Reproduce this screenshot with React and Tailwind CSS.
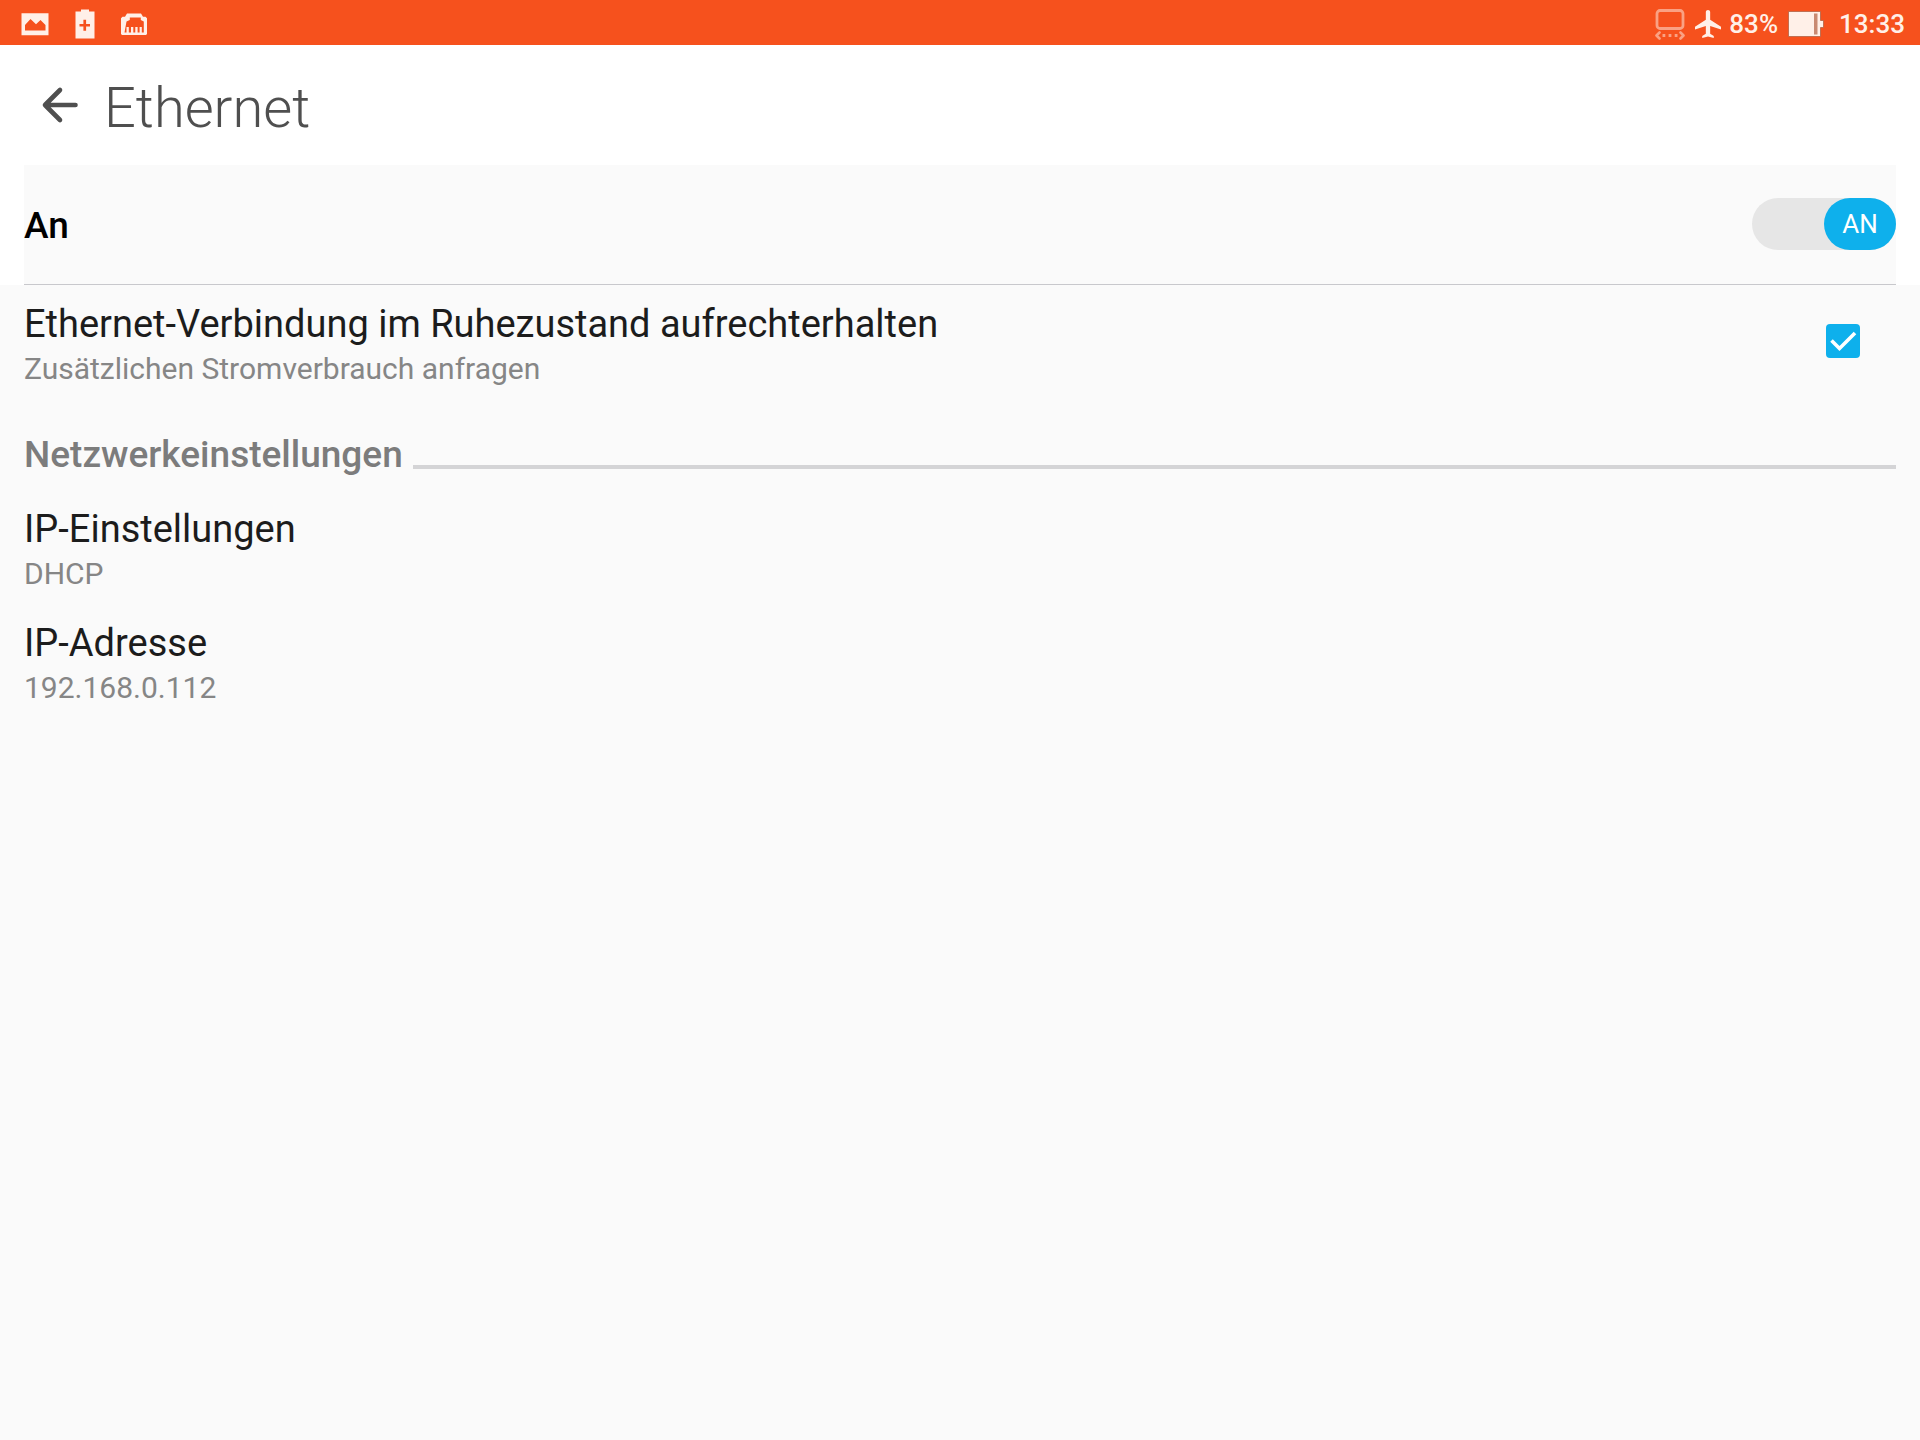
import { useState } from "react";

function PictureIcon() {
  return (
    <svg className="w-7 h-6" viewBox="0 0 28 24" aria-hidden="true">
      <path fill="currentColor" fillRule="evenodd"
        d="M.5 1.200h27v22H.5zM4 18.500h20.500V13L19.500 8l-4.500 4.300L9.500 7 4 13z" />
    </svg>
  );
}

function BatteryPlusIcon() {
  return (
    <svg className="w-5 h-[30px]" viewBox="0 0 20 30" aria-hidden="true">
      <path fill="currentColor" fillRule="evenodd"
        d="M6 .500h8v2h5.500v27H.5v-27H6zM8.400 10.800v4.200H4.500v2.600h3.900v4.200h2.700v-4.200H15V15h-3.900v-4.200z" />
    </svg>
  );
}

function EthernetIcon() {
  return (
    <svg className="w-[26px] h-6" viewBox="0 0 26 24" aria-hidden="true">
      <path fill="currentColor" fillRule="evenodd"
        d="M1.500 4.800H4L6 1.500h14l2 3.300h2.500L26 6.300V22l-1 1H1l-1-1V6.300zM3.500 20.500h2V15h2.300v5.500h2.200V15h2.300v5.500h2V15h2.300v5.500h2V15h2.200v5.500h2V9.500l-3-1.500V5.500h-11V8l-3.300 1.500z" />
    </svg>
  );
}

function CastIcon() {
  return (
    <svg className="w-[30px] h-8 opacity-50" viewBox="0 0 30 32" fill="none" stroke="currentColor" aria-hidden="true">
      <rect x="2" y="2.500" width="26" height="18" rx="3" strokeWidth="2.800" />
      <path strokeWidth="2.600" strokeLinecap="round" strokeLinejoin="round" d="M4.500 24.500l-3 3 3 3M25.500 24.500l3 3-3 3" />
      <path strokeWidth="2.800" d="M7.500 27.500h2.800M13.600 27.500h2.800M19.700 27.500h2.800" />
    </svg>
  );
}

function PlaneIcon() {
  return (
    <svg className="w-[26px] h-7" viewBox="3 2 18 20" preserveAspectRatio="none" aria-hidden="true">
      <path fill="currentColor"
        d="M21 16v-2l-7.500-5V3.500c0-.83-.67-1.500-1.500-1.500s-1.500.67-1.500 1.500V9L3 14v2l7.500-2.500V19L8 20.500V22l4-1 4 1v-1.500L13.500 19v-5.500z" />
    </svg>
  );
}

function BatteryIcon() {
  return (
    <svg className="w-9 h-[26px]" viewBox="0 0 36 26" aria-hidden="true">
      <path fill="currentColor" stroke="#a85a3c" strokeOpacity="0.700" d="M.5.500h32v9h3v7h-3v9H.5z" />
      <path fill="#c98a72" d="M26 2.500h3.500v21H26z" />
    </svg>
  );
}

function StatusBar() {
  return (
    <div className="h-[45px] bg-[#f6511d] text-[#fff0e8] flex items-center justify-between pl-[21px] pr-[15px]">
      <div className="flex items-center gap-[26px] pt-0.5">
        <PictureIcon />
        <BatteryPlusIcon />
        <EthernetIcon />
      </div>
      <div className="flex items-center text-[26px] leading-8 font-medium pt-[3px]">
        <CastIcon />
        <span className="ml-2.5"><PlaneIcon /></span>
        <span className="ml-2">83%</span>
        <span className="ml-2.5"><BatteryIcon /></span>
        <time className="ml-[15px]">13:33</time>
      </div>
    </div>
  );
}

function Header() {
  return (
    <header className="h-[120px] bg-white text-[#4f4f4f] flex items-center gap-6 pl-10">
      <button aria-label="Zurück" className="cursor-pointer">
        <svg className="w-10 h-10" viewBox="0 0 40 40" fill="none" stroke="currentColor" strokeWidth="4.600" aria-hidden="true">
          <path strokeLinecap="round" strokeLinejoin="round" d="M20 5L5 20l15 15M5.500 20h30" />
        </svg>
      </button>
      <h1 className="pt-1.5 text-[56px] leading-[64px] font-light">Ethernet</h1>
    </header>
  );
}

function SwitchRow({ checked, onChange }) {
  return (
    <div className="bg-white px-6">
      <label className="h-[120px] bg-[#fafafa] border-b border-[#c8c8cc] flex items-center justify-between cursor-pointer">
        <span className="pt-0.5 text-[37px] leading-[48px] font-medium text-black">{checked ? "An" : "Aus"}</span>
        <input type="checkbox" role="switch" className="sr-only" checked={checked} onChange={onChange} />
        <span className={checked ? "mb-0.5 w-36 h-[52px] rounded-full bg-[#e6e6e6] flex justify-end" : "mb-0.5 w-36 h-[52px] rounded-full bg-[#e6e6e6] flex"}>
          <span className={checked
            ? "w-[72px] pt-0.5 rounded-full bg-[#0eb0ec] text-white text-[26px] flex items-center justify-center"
            : "w-[72px] pt-0.5 rounded-full bg-[#b0b0b0] text-white text-[26px] flex items-center justify-center"}
          >
            {checked ? "AN" : "AUS"}
          </span>
        </span>
      </label>
    </div>
  );
}

function Preference({ title, summary, children }) {
  return (
    <div className="flex items-center justify-between py-3">
      <div>
        <div className="text-[38px] leading-[48px] text-[#1c1c1c]">{title}</div>
        <div className="text-[30px] leading-[42px] text-[#868686]">{summary}</div>
      </div>
      {children}
    </div>
  );
}

export default function App() {
  const [enabled, setEnabled] = useState(true);
  const [keepAlive, setKeepAlive] = useState(true);

  return (
    <div className="min-h-screen bg-[#fafafa] font-['Roboto',sans-serif]">
      <StatusBar />
      <Header />
      <main>
        <SwitchRow checked={enabled} onChange={() => setEnabled(!enabled)} />
        <div className="px-6 pt-[3px]">
          <Preference
            title={<label htmlFor="keep-alive">Ethernet-Verbindung im Ruhezustand aufrechterhalten</label>}
            summary="Zusätzlichen Stromverbrauch anfragen"
          >
            <span className="relative mr-9 mb-2 w-[34px] h-[34px]">
              <input
                id="keep-alive"
                type="checkbox"
                checked={keepAlive}
                onChange={() => setKeepAlive(!keepAlive)}
                className="block appearance-none w-[34px] h-[34px] rounded border-4 border-[#868686] checked:border-0 checked:bg-[#0eb0ec] cursor-pointer"
              />
              {keepAlive && (
                <svg className="absolute inset-0 pointer-events-none" viewBox="0 0 34 34" fill="none" stroke="white" strokeWidth="3.600" aria-hidden="true">
                  <path d="M5.500 16.500l8 8L29 9" />
                </svg>
              )}
            </span>
          </Preference>
          <section>
            <div className="h-[91px] pt-7 flex items-start gap-2.5">
              <h2 className="text-[37px] leading-[50px] font-medium text-[#7c7c7c]">Netzwerkeinstellungen</h2>
              <span className="flex-1 mt-[35px] h-1 bg-[#d4d4d6]" />
            </div>
            <Preference title="IP-Einstellungen" summary="DHCP" />
            <Preference title="IP-Adresse" summary="192.168.0.112" />
          </section>
        </div>
      </main>
    </div>
  );
}
